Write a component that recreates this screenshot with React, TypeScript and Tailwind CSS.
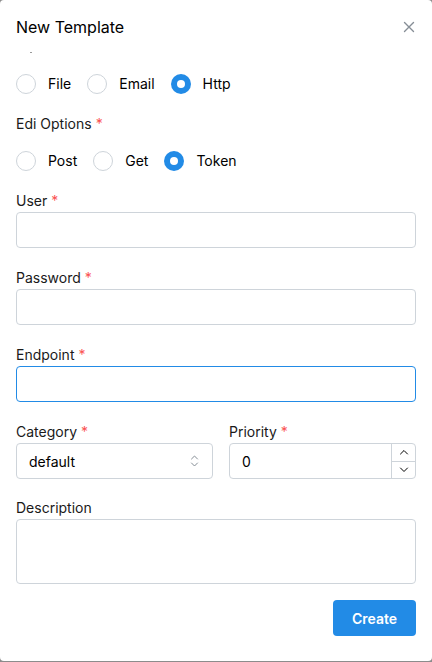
import React from "react";

const font = { fontFamily: "Inter, 'Noto Sans', sans-serif" };

function Req() {
  return <span className="text-[#fa5252] ml-[4px]">*</span>;
}

function Label({ children, required }: { children: React.ReactNode; required?: boolean }) {
  return (
    <div className="h-[22px] leading-[22px] text-[14px] font-normal text-[#1a1a1a]">
      {children}
      {required && <Req />}
    </div>
  );
}

function Radio({ label, checked }: { label: string; checked?: boolean }) {
  return (
    <div className="flex items-center">
      {checked ? (
        <div className="w-[20px] h-[20px] rounded-full bg-[#228be6] flex items-center justify-center">
          <div className="w-[8px] h-[8px] rounded-full bg-white" />
        </div>
      ) : (
        <div className="w-[20px] h-[20px] rounded-full border border-[#ced4da] bg-white" />
      )}
      <span className="ml-[12px] text-[14px] text-black leading-[20px]">{label}</span>
    </div>
  );
}

export default function App() {
  return (
    <div className="w-[432px] h-[662px] bg-[#8c8c8c]" style={font}>
      <div className="w-[432px] h-[661px] bg-white rounded-[4px] overflow-hidden flex flex-col px-[16px]">
        <div className="h-[52px] flex items-center justify-between shrink-0 pt-[2px]">
          <div className="text-[16px] text-black leading-[24px]">New Template</div>
          <svg width="12" height="12" viewBox="0 0 12 12" className="mr-[1px]">
            <path d="M1.5 1.5 L10.5 10.5 M10.5 1.5 L1.5 10.5" stroke="#868e96" strokeWidth="1.4" strokeLinecap="round" />
          </svg>
        </div>
        <div className="h-[22px] shrink-0">
          <div className="w-[2px] h-[1px] bg-[#9a9a9a] ml-[14px]" />
        </div>
        <div className="flex gap-4 h-[20px]">
          <Radio label="File" />
          <Radio label="Email" />
          <Radio label="Http" checked />
        </div>
        <div className="mt-[19px]">
          <Label required>Edi Options</Label>
        </div>
        <div className="flex gap-4 h-[20px] mt-[16px]">
          <Radio label="Post" />
          <Radio label="Get" />
          <Radio label="Token" checked />
        </div>
        <div className="mt-[19px]">
          <Label required>User</Label>
          <div className="h-[36px] rounded-[4px] border border-[#ced4da]" />
        </div>
        <div className="mt-[19px]">
          <Label required>Password</Label>
          <div className="h-[36px] rounded-[4px] border border-[#ced4da]" />
        </div>
        <div className="mt-[19px]">
          <Label required>Endpoint</Label>
          <div className="h-[36px] rounded-[4px] border border-[#228be6]" />
        </div>
        <div className="mt-[19px] grid grid-cols-[197px_1fr] gap-4">
          <div>
            <Label required>Category</Label>
            <div className="h-[36px] rounded-[4px] border border-[#ced4da] flex items-center justify-between pl-[12px] pr-[13px]">
              <span className="text-[14px] text-black">default</span>
              <svg width="9" height="14" viewBox="0 0 9 14">
                <path d="M1.5 5 L4.5 2 L7.5 5 M1.5 9 L4.5 12 L7.5 9" fill="none" stroke="#868e96" strokeWidth="1" strokeLinecap="round" strokeLinejoin="round" />
              </svg>
            </div>
          </div>
          <div>
            <Label required>Priority</Label>
            <div className="h-[36px] rounded-[4px] border border-[#ced4da] flex items-center">
              <span className="flex-1 pl-[12px] text-[14px] text-black">0</span>
              <div className="w-[24px] h-full border-l border-[#ced4da] flex flex-col">
                <div className="flex-1 flex items-center justify-center border-b border-[#ced4da]">
                  <svg width="10" height="6" viewBox="0 0 10 6">
                    <path d="M1.5 5 L5 1.5 L8.5 5" fill="none" stroke="#000" strokeWidth="1" strokeLinecap="round" strokeLinejoin="round" />
                  </svg>
                </div>
                <div className="flex-1 flex items-center justify-center">
                  <svg width="10" height="6" viewBox="0 0 10 6">
                    <path d="M1.5 1 L5 4.5 L8.5 1" fill="none" stroke="#000" strokeWidth="1" strokeLinecap="round" strokeLinejoin="round" />
                  </svg>
                </div>
              </div>
            </div>
          </div>
        </div>
        <div className="mt-[18px]">
          <Label>Description</Label>
          <div className="h-[65px] rounded-[4px] border border-[#ced4da]" />
        </div>
        <div className="flex justify-end mt-[16px]">
          <button className="w-[83px] h-[36px] rounded-[4px] bg-[#228be6] text-white text-[14px] font-semibold">
            Create
          </button>
        </div>
      </div>
    </div>
  );
}
